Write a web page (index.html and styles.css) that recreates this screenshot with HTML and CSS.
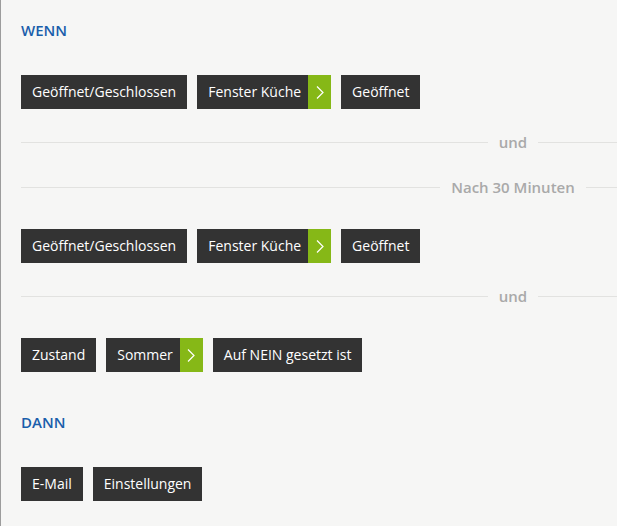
FILE: index.html
```html
<!DOCTYPE html>
<html lang="de">
<head>
<meta charset="utf-8">
<link rel="stylesheet" href="styles.css">
</head>
<body>
<div class="page">
  <h2 class="heading heading-first">WENN</h2>
  <div class="row row-first">
    <span class="chip">Geöffnet/Geschlossen</span>
    <span class="chip chip-arrow">Fenster Küche<span class="arrow"><svg width="8" height="13" viewBox="0 0 8 13"><path d="M1 0.5 L7 6.5 L1 12.5" fill="none" stroke="#fff" stroke-width="1.2"/></svg></span></span>
    <span class="chip">Geöffnet</span>
  </div>
  <div class="rule rule-a"><span>und</span></div>
  <div class="rule rule-b"><span>Nach 30 Minuten</span></div>
  <div class="row row-after-rule">
    <span class="chip">Geöffnet/Geschlossen</span>
    <span class="chip chip-arrow">Fenster Küche<span class="arrow"><svg width="8" height="13" viewBox="0 0 8 13"><path d="M1 0.5 L7 6.5 L1 12.5" fill="none" stroke="#fff" stroke-width="1.2"/></svg></span></span>
    <span class="chip">Geöffnet</span>
  </div>
  <div class="rule rule-a"><span>und</span></div>
  <div class="row row-after-rule">
    <span class="chip">Zustand</span>
    <span class="chip chip-arrow">Sommer<span class="arrow"><svg width="8" height="13" viewBox="0 0 8 13"><path d="M1 0.5 L7 6.5 L1 12.5" fill="none" stroke="#fff" stroke-width="1.2"/></svg></span></span>
    <span class="chip">Auf NEIN gesetzt ist</span>
  </div>
  <h2 class="heading heading-then">DANN</h2>
  <div class="row row-first">
    <span class="chip">E-Mail</span>
    <span class="chip">Einstellungen</span>
  </div>
</div>
</body>
</html>
```
FILE: styles.css
```css
html, body {
  margin: 0;
  padding: 0;
  overflow: hidden;
  background: #f6f6f5;
  height: 100%;
}
body {
  font-family: "Open Sans", "Liberation Sans", sans-serif;
}
.page {
  border-left: 1px solid #9c9c9c;
  padding: 20px 0 0 20px;
  width: 984px;
  min-height: 600px;
  box-sizing: content-box;
}
.heading {
  margin: 0;
  font-size: 15px;
  line-height: 20px;
  font-weight: 600;
  color: #1a5eab;
}
.heading-then {
  margin-top: 40px;
}
.row {
  display: flex;
  gap: 10px;
}
.row-first {
  margin-top: 35px;
}
.row-after-rule {
  margin-top: 32px;
}
.chip {
  display: flex;
  align-items: stretch;
  background: #333333;
  color: #ffffff;
  font-size: 14px;
  line-height: 20px;
  padding: 7px 11px;
}
.chip-arrow {
  padding-right: 0;
}
.arrow {
  display: flex;
  align-items: center;
  justify-content: center;
  width: 23px;
  margin: -7px 0 -7px 7px;
  background: #86b817;
}
.rule {
  display: grid;
  grid-template-columns: 1fr auto 1fr;
  align-items: center;
  height: 20px;
}
.rule::before, .rule::after {
  content: "";
  height: 1px;
  background: #e2e2e0;
}
.rule span {
  padding: 0 11px;
  font-size: 15px;
  line-height: 20px;
  font-weight: 600;
  color: #a9a9a9;
}
.rule-a {
  margin-top: 23px;
}
.rule-b {
  margin-top: 25px;
}
```
